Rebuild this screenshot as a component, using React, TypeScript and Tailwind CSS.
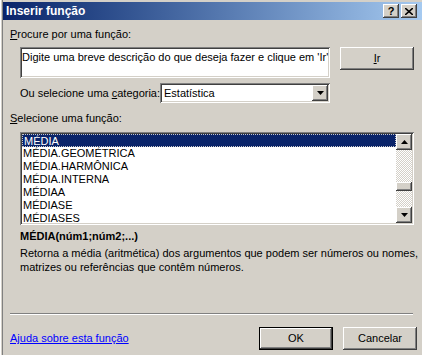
import React from "react";

const raised =
  "shadow-[inset_-1px_-1px_#404040,inset_1px_1px_#ffffff,inset_-2px_-2px_#808080,inset_2px_2px_#d4d0c8]";
const sunken =
  "shadow-[inset_1px_1px_#808080,inset_-1px_-1px_#ffffff,inset_2px_2px_#404040,inset_-2px_-2px_#d4d0c8]";

const functions = [
  "MÉDIA",
  "MÉDIA.GEOMÉTRICA",
  "MÉDIA.HARMÔNICA",
  "MÉDIA.INTERNA",
  "MÉDIAA",
  "MÉDIASE",
  "MÉDIASES",
];

const Arrow: React.FC<{ dir: "up" | "down" }> = ({ dir }) => (
  <svg width="7" height="4" viewBox="0 0 7 4">
    {dir === "up" ? (
      <path d="M3.5 0 L7 4 L0 4 Z" fill="#000" />
    ) : (
      <path d="M0 0 L7 0 L3.5 4 Z" fill="#000" />
    )}
  </svg>
);

const App: React.FC = () => {
  return (
    <div className="w-[422px] h-[355px] overflow-hidden bg-[#d4d0c8] pt-[2px] pl-[3px] text-[11px] text-black whitespace-nowrap font-['Liberation_Sans',Arial,sans-serif] shadow-[inset_1px_0_#ffffff,inset_2px_0_#d4d0c8,inset_3px_0_#808080]">
      {/* title bar */}
      <div className="h-[18px] flex items-center justify-between pl-[3px] pr-[5px] bg-gradient-to-r from-[#0a246a] to-[#a6caf0]">
        <span className="text-white font-bold text-[12px] leading-none">Inserir função</span>
        <div className="flex gap-[2px]">
          <div className={`w-[16px] h-[14px] bg-[#d4d0c8] flex items-center justify-center font-bold text-[11px] leading-none ${raised}`}>
            ?
          </div>
          <div className={`w-[16px] h-[14px] bg-[#d4d0c8] flex items-center justify-center ${raised}`}>
            <svg width="8" height="7" viewBox="0 0 8 7">
              <path d="M0 0 L8 7 M8 0 L0 7" stroke="#000" strokeWidth="1.6" />
            </svg>
          </div>
        </div>
      </div>

      {/* body */}
      <div className="flex flex-col">
        <div className="ml-[7px] mt-[8px] leading-[13px]">
          <span className="underline">P</span>rocure por uma função:
        </div>

        <div className="ml-[17px] mt-[6px] flex items-start gap-[10px]">
          <div className={`w-[310px] h-[31px] bg-white px-[2px] pt-[4px] leading-[13px] overflow-hidden ${sunken}`}>
            Digite uma breve descrição do que deseja fazer e clique em 'Ir'
          </div>
          <div className={`w-[74px] h-[23px] flex items-center justify-center ${raised}`}>
            <span className="underline">I</span>r
          </div>
        </div>

        <div className="ml-[17px] mt-[5px] flex items-center">
          <div className="w-[140px]">
            Ou selecione uma <span className="underline">c</span>ategoria:
          </div>
          <div className={`w-[170px] h-[20px] bg-white flex items-center justify-between pl-[4px] pr-[2px] ${sunken}`}>
            <span>Estatística</span>
            <div className={`w-[16px] h-[16px] bg-[#d4d0c8] flex items-center justify-center ${raised}`}>
              <Arrow dir="down" />
            </div>
          </div>
        </div>

        <div className="ml-[7px] mt-[9px] leading-[13px]">
          <span className="underline">S</span>elecione uma função:
        </div>

        <div className={`ml-[17px] mt-[7px] w-[394px] h-[93px] bg-white p-[2px] flex ${sunken}`}>
          <div className="flex-1 overflow-hidden">
            {functions.map((f, i) => (
              <div
                key={f}
                className={`h-[13px] leading-[12px] pl-[1px] ${
                  i === 0
                    ? "bg-[#0a246a] text-white border border-dotted border-[#c8c8c8]"
                    : ""
                }`}
              >
                {f}
              </div>
            ))}
          </div>
          <div className="w-[16px] flex flex-col bg-[repeating-conic-gradient(#d4d0c8_0%_25%,#ffffff_0%_50%)] bg-[length:2px_2px]">
            <div className={`h-[16px] bg-[#d4d0c8] flex items-center justify-center ${raised}`}>
              <Arrow dir="up" />
            </div>
            <div className="flex-1 flex flex-col">
              <div className="h-[32px]" />
              <div className={`h-[9px] bg-[#d4d0c8] ${raised}`} />
            </div>
            <div className={`h-[16px] bg-[#d4d0c8] flex items-center justify-center ${raised}`}>
              <Arrow dir="down" />
            </div>
          </div>
        </div>

        <div className="ml-[17px] mt-[5px] font-bold leading-[13px]">MÉDIA(núm1;núm2;...)</div>
        <div className="ml-[17px] mt-[3px] leading-[14px]">
          Retorna a média (aritmética) dos argumentos que podem ser números ou nomes,
          <br />
          matrizes ou referências que contêm números.
        </div>

        <div className="ml-[7px] mt-[39px] w-[403px] h-[2px] border-t border-t-[#808080] border-b border-b-white" />

        <div className="ml-[7px] mt-[12px] flex items-center">
          <a className="text-[#0000ff] underline flex-1" href="#">
            Ajuda sobre esta função
          </a>
          <div className="flex gap-[10px] mr-[5px]">
            <div className={`w-[74px] h-[23px] flex items-center justify-center border border-black ${raised}`}>
              OK
            </div>
            <div className={`w-[74px] h-[23px] flex items-center justify-center ${raised}`}>
              Cancelar
            </div>
          </div>
        </div>
      </div>
    </div>
  );
};

export default App;
